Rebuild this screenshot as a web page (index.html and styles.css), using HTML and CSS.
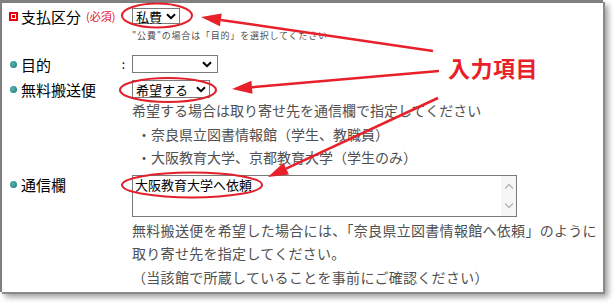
FILE: index.html
```html
<!DOCTYPE html>
<html lang="ja">
<head>
<meta charset="utf-8">
<title>支払区分</title>
<link rel="stylesheet" href="styles.css">
</head>
<body>
<div class="card">
  <div class="row r1">
    <div class="label"><span class="mark-req"></span><span class="lt">支払区分</span><span class="req">(必須)</span></div>
    <div class="value">
      <div class="sel sel1"><span class="sel-text">私費</span><svg class="chev" width="10" height="7" viewBox="0 0 10 7"><path d="M1 1.2 L5 5.2 L9 1.2" fill="none" stroke="#000" stroke-width="2"/></svg></div>
      <div class="note">"公費"の場合は「目的」を選択してください</div>
    </div>
  </div>
  <div class="row r2">
    <div class="label"><span class="dot"></span><span class="lt">目的</span><span class="colon">:</span></div>
    <div class="value">
      <div class="sel sel2"><span class="sel-text"></span><svg class="chev" width="10" height="7" viewBox="0 0 10 7"><path d="M1 1.2 L5 5.2 L9 1.2" fill="none" stroke="#000" stroke-width="2"/></svg></div>
    </div>
  </div>
  <div class="row r3">
    <div class="label"><span class="dot"></span><span class="lt">無料搬送便</span></div>
    <div class="value">
      <div class="sel sel3"><span class="sel-text">希望する</span><svg class="chev" width="10" height="7" viewBox="0 0 10 7"><path d="M1 1.2 L5 5.2 L9 1.2" fill="none" stroke="#000" stroke-width="2"/></svg></div>
      <div class="help">
        <p>希望する場合は取り寄せ先を通信欄で指定してください</p>
        <p class="ind">・奈良県立図書情報館（学生、教職員）</p>
        <p class="ind">・大阪教育大学、京都教育大学（学生のみ）</p>
      </div>
    </div>
  </div>
  <div class="row r4">
    <div class="label"><span class="dot"></span><span class="lt">通信欄</span></div>
    <div class="value">
      <div class="textarea">
        <div class="ta-text">大阪教育大学へ依頼</div>
        <div class="ta-scroll">
          <svg width="10" height="7" viewBox="0 0 10 7"><path d="M1 5.5 L5 1.5 L9 5.5" fill="none" stroke="#b4b4b4" stroke-width="1.3"/></svg>
          <svg width="10" height="7" viewBox="0 0 10 7"><path d="M1 1.5 L5 5.5 L9 1.5" fill="none" stroke="#b4b4b4" stroke-width="1.3"/></svg>
        </div>
      </div>
      <div class="help help2">
        <p>無料搬送便を希望した場合には、「奈良県立図書情報館へ依頼」のように</p>
        <p>取り寄せ先を指定してください。</p>
        <p>（当該館で所蔵していることを事前にご確認ください）</p>
      </div>
    </div>
  </div>
</div>

<svg class="overlay" width="614" height="303" viewBox="0 0 614 303">
  <g fill="none" stroke="#e2202c" stroke-width="2">
    <ellipse cx="157" cy="15.5" rx="35" ry="12"/>
    <ellipse cx="168" cy="90" rx="48" ry="12"/>
    <ellipse cx="192" cy="185" rx="70" ry="12.5"/>
  </g>
  <g stroke="#e8202a" stroke-width="2.5" fill="none">
    <line x1="433" y1="51" x2="220.8" y2="19.9"/>
    <line x1="439" y1="71" x2="251.9" y2="87.3"/>
    <line x1="438" y1="98" x2="286.1" y2="168.6"/>
  </g>
  <g fill="#e8202a">
    <polygon points="201,17 221.7,13.5 219.9,26.3"/>
    <polygon points="232,89 251.4,80.8 252.5,93.8"/>
    <polygon points="268,177 283.4,162.7 288.9,174.5"/>
  </g>
</svg>
<div class="callout">入力項目</div>
</body>
</html>
```

FILE: styles.css
```css
* {
  box-sizing: border-box;
  margin: 0;
  padding: 0;
}

body {
  margin: 0;
  width: 614px;
  height: 303px;
  overflow: hidden;
  position: relative;
  background: #fff;
  font-family: "Noto Sans CJK JP", "Noto Sans", sans-serif;
  color: #000;
}

.card {
  width: 603px;
  height: 292px;
  background: #fff;
  border-top: 3px solid #808080;
  border-left: 2px solid #808080;
  box-shadow: 2px 2px 0 #8a8a8a, 5px 5px 6px rgba(0, 0, 0, 0.4);
  padding: 5px 0 0 7px;
}

.row {
  display: grid;
  grid-template-columns: 123px auto;
  align-items: start;
}

.label {
  display: flex;
  align-items: center;
  height: 18px;
  font-size: 15px;
  line-height: 1;
  white-space: nowrap;
}

.r1 .label {
  height: 16px;
}

.lt {
  margin-left: 3px;
}

.mark-req {
  width: 9px;
  height: 9px;
  flex: none;
  background: #e8000c;
  border: 2px solid #e8000c;
  box-shadow: inset 0 0 0 1px #fff;
}

.dot {
  width: 9px;
  height: 9px;
  flex: none;
}

.dot::before {
  content: "";
  display: block;
  width: 7px;
  height: 7px;
  margin: 1px;
  border-radius: 50%;
  background: radial-gradient(circle at 40% 40%, #5cb3b3 0%, #2f8e8e 60%, #267a7a 100%);
}

.req {
  color: #e8101c;
  font-size: 11px;
  margin-left: 5px;
}

.colon {
  margin-left: auto;
  margin-right: 7px;
  font-size: 12px;
}

.r2 {
  margin-top: 13px;
}

.r3 {
  margin-top: 7px;
}

.r4 {
  margin-top: 5.5px;
}

.sel {
  display: flex;
  align-items: center;
  justify-content: space-between;
  border: 1px solid #7a7a7a;
  background: #fff;
  height: 18px;
  padding-left: 3px;
  font-size: 13px;
  line-height: 1;
}

.sel1 {
  width: 48px;
  height: 16px;
  padding-right: 3px;
}

.sel2 {
  width: 86px;
  padding-right: 5px;
}

.sel3 {
  width: 78px;
  padding-right: 3px;
}

.chev {
  flex: none;
}

.note {
  margin-top: 6px;
  font-size: 9px;
  line-height: 12px;
  letter-spacing: 0.8px;
  color: #505050;
  white-space: nowrap;
}

.help {
  margin-top: 1px;
  font-size: 14px;
  line-height: 23.5px;
  color: #505050;
  white-space: nowrap;
}

.help .ind {
  padding-left: 5px;
}

.help2 {
  margin-top: 2px;
  line-height: 23.3px;
  letter-spacing: 0.3px;
}

.textarea {
  width: 385px;
  height: 42px;
  border: 1px solid #7a7a7a;
  display: flex;
  justify-content: space-between;
  background: #fff;
}

.ta-text {
  font-size: 13px;
  line-height: 16px;
  padding: 1px 0 0 2px;
  white-space: nowrap;
}

.ta-scroll {
  width: 15px;
  background: #f6f6f6;
  display: flex;
  flex-direction: column;
  align-items: center;
  justify-content: space-between;
  padding: 7px 0 7px;
}

.overlay {
  position: absolute;
  left: 0;
  top: 0;
  pointer-events: none;
}

.callout {
  position: absolute;
  left: 448px;
  top: 55px;
  font-size: 22px;
  line-height: 24px;
  font-weight: bold;
  color: #e8202a;
  letter-spacing: 0.5px;
  white-space: nowrap;
}
```
